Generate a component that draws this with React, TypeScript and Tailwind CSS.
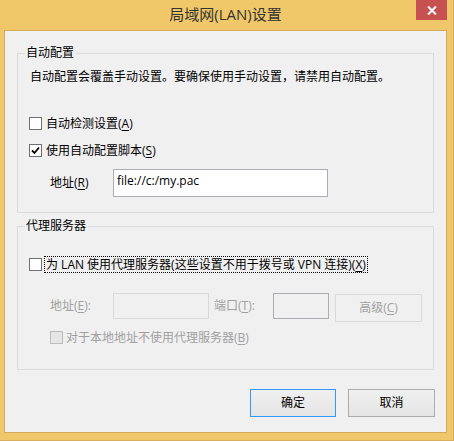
import React from "react";

const font = { fontFamily: '"Open Sans", "Noto Sans CJK SC", sans-serif' };

function Check({ checked, disabled }: { checked?: boolean; disabled?: boolean }) {
  return (
    <div
      className={
        "w-[13px] h-[13px] shrink-0 border flex items-center justify-center " +
        (disabled ? "border-[#BCBCBC] bg-[#E6E6E6]" : "border-[#707070] bg-white")
      }
    >
      {checked && (
        <svg width="9" height="9" viewBox="0 0 9 9">
          <path d="M1 4.5 L3.5 7 L8 1.5" fill="none" stroke="#000" strokeWidth="1.8" />
        </svg>
      )}
    </div>
  );
}

function U({ children }: { children: React.ReactNode }) {
  return <span className="underline underline-offset-2">{children}</span>;
}

export default function App() {
  return (
    <div
      className="w-[454px] h-[441px] bg-[#F0C86A] relative flex flex-col border-r border-b border-[#D6AE5E] text-[12px] leading-[16px] text-black"
      style={font}
    >
      <div className="h-[30px] shrink-0 flex items-center justify-center text-[15px] text-[#333333] pr-[2px] pb-[2px]">
        局域网(LAN)设置
      </div>
      <div className="absolute top-0 left-[416px] w-[31px] h-[20px] bg-[#C75050] flex items-center justify-center">
        <svg width="10" height="9" viewBox="0 0 10 9">
          <path d="M1 0.5 L9 8.5 M9 0.5 L1 8.5" stroke="#fff" strokeWidth="2" />
        </svg>
      </div>

      <div className="ml-[4px] w-[443px] h-[403px] shrink-0 border border-[#D3AB5C] bg-[#F0F0F0] flex flex-col">
        {/* Group 1 */}
        <div className="relative ml-[12px] mt-[22px] w-[417px] h-[160px] shrink-0 border border-[#DCDCDC] flex flex-col">
          <span className="absolute left-[7px] top-[-9px] px-[1px] bg-[#F0F0F0] leading-[16px]">自动配置</span>
          <div className="mt-[15px] h-[16px] pl-[12px] flex items-center whitespace-nowrap">
            自动配置会覆盖手动设置。要确保使用手动设置，请禁用自动配置。
          </div>
          <div className="mt-[32px] h-[13px] pl-[11px] flex items-center">
            <Check />
            <span className="ml-[4px] whitespace-nowrap">
              自动检测设置(<U>A</U>)
            </span>
          </div>
          <div className="mt-[14px] h-[13px] pl-[11px] flex items-center">
            <Check checked />
            <span className="ml-[4px] whitespace-nowrap">
              使用自动配置脚本(<U>S</U>)
            </span>
          </div>
          <div className="mt-[12px] h-[28px] pl-[32px] flex items-center">
            <div className="w-[63px] shrink-0 whitespace-nowrap">
              地址(<U>R</U>)
            </div>
            <div className="w-[215px] h-[28px] border border-[#ABADB3] bg-white pl-[3px] pt-[3px] whitespace-nowrap">
              file://c:/my.pac
            </div>
          </div>
        </div>

        {/* Group 2 */}
        <div className="relative ml-[12px] mt-[13px] w-[417px] h-[144px] shrink-0 border border-[#DCDCDC] flex flex-col">
          <span className="absolute left-[7px] top-[-9px] px-[1px] bg-[#F0F0F0] leading-[16px]">代理服务器</span>
          <div className="mt-[29px] h-[17px] pl-[11px] flex items-center">
            <Check />
            <span className="ml-[2px] h-[17px] px-[1px] flex items-center border border-dotted border-black whitespace-nowrap">
              为 LAN 使用代理服务器(这些设置不用于拨号或 VPN 连接)(<U>X</U>)
            </span>
          </div>
          <div className="mt-[20px] h-[29px] pl-[32px] flex items-start text-[#A0A0A0]">
            <div className="w-[63px] h-[26px] shrink-0 flex items-center whitespace-nowrap">
              地址(<U>E</U>):
            </div>
            <div className="w-[96px] h-[26px] shrink-0 border border-[#D9D9D9] bg-[#F0F0F0]" />
            <div className="ml-[5px] w-[59px] h-[26px] shrink-0 flex items-center whitespace-nowrap">
              端口(<U>T</U>):
            </div>
            <div className="w-[56px] h-[26px] shrink-0 border border-[#ABADB3] bg-[#F0F0F0]" />
            <div className="ml-[6px] mt-[1px] w-[87px] h-[28px] shrink-0 border border-[#D9D9D9] bg-[#F0F0F0] flex items-center justify-center whitespace-nowrap">
              高级(<U>C</U>)
            </div>
          </div>
          <div className="mt-[9px] h-[13px] pl-[32px] flex items-center text-[#A0A0A0]">
            <Check disabled />
            <span className="ml-[3px] whitespace-nowrap">
              对于本地地址不使用代理服务器(<U>B</U>)
            </span>
          </div>
        </div>

        {/* Buttons */}
        <div className="mt-[19px] flex justify-end pr-[11px] gap-[12px]">
          <div className="w-[86px] h-[28px] border border-[#3399FF] bg-gradient-to-b from-[#F0F0F0] to-[#E5E5E5] flex items-center justify-center">
            确定
          </div>
          <div className="w-[87px] h-[28px] border border-[#ACACAC] bg-gradient-to-b from-[#F0F0F0] to-[#E5E5E5] flex items-center justify-center">
            取消
          </div>
        </div>
      </div>
    </div>
  );
}
